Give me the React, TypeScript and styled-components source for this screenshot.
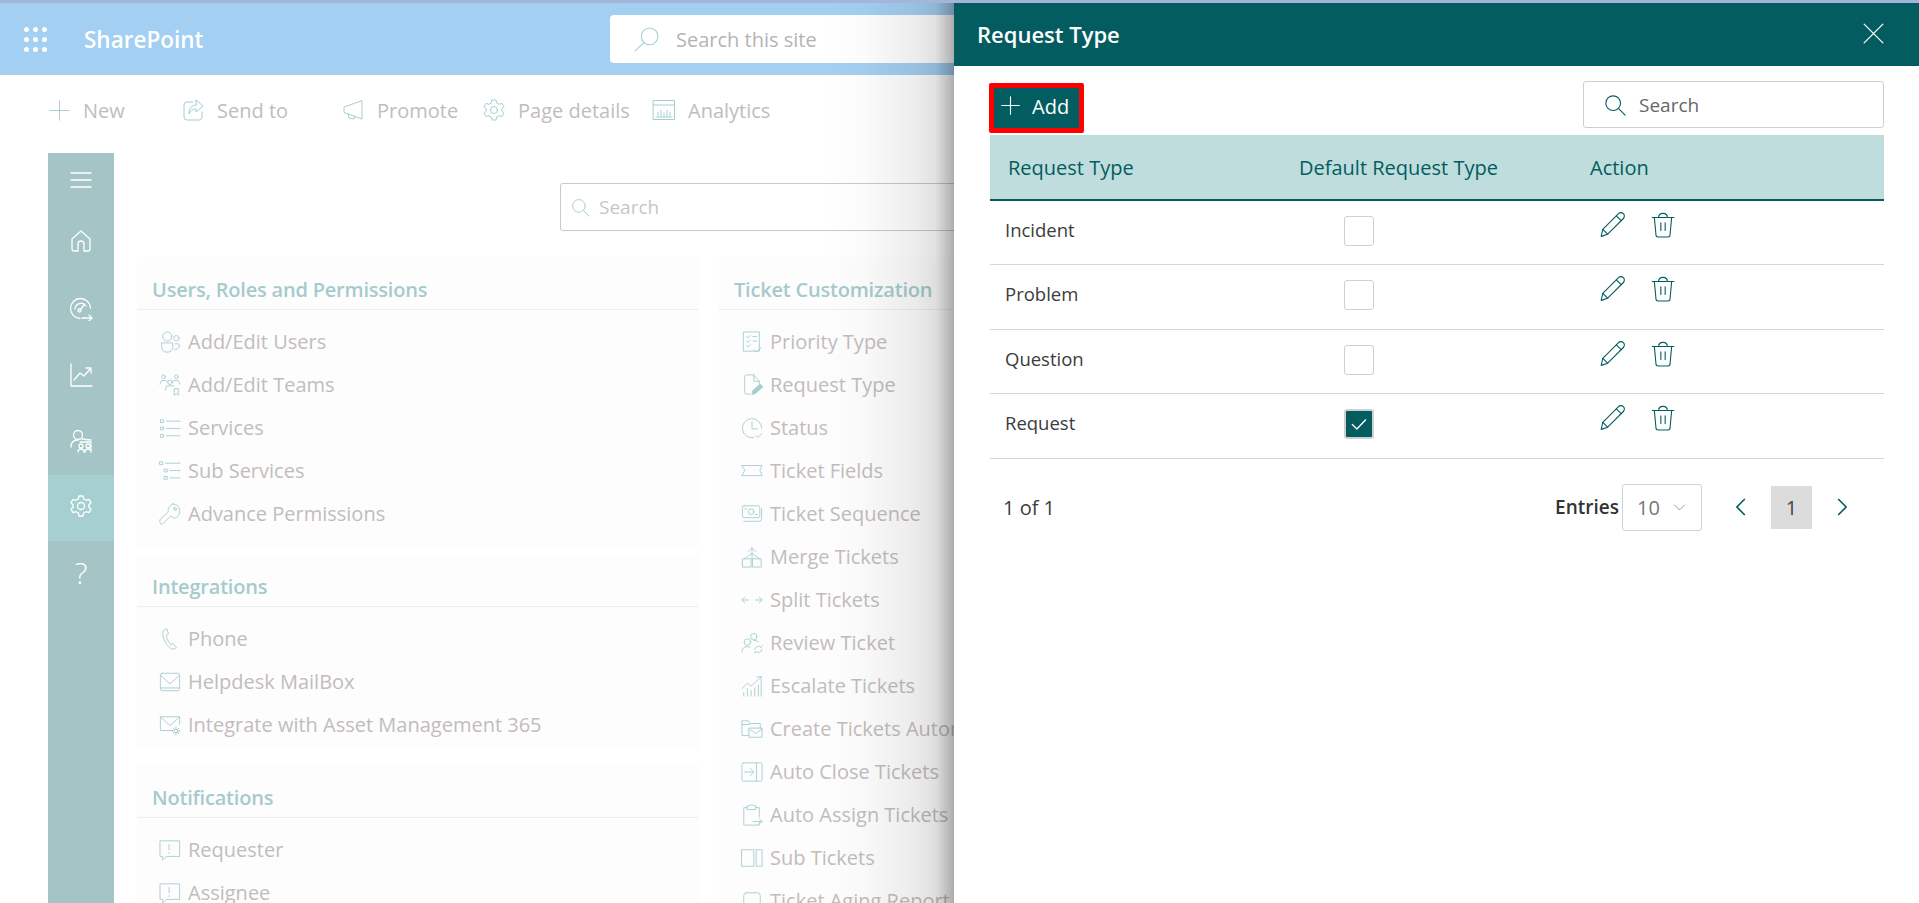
import React from 'react';
import styled, { createGlobalStyle } from 'styled-components';

const teal = '#025c60';
const fadedIcon = '#a6cdd0';

const GlobalStyle = createGlobalStyle`
    html, body {
        margin: 0;
        padding: 0;
        background: #fff;
        font-family: "Open Sans", "Noto Sans", sans-serif;
    }
`

const Page = styled.div`
    position: relative;
    width: 1919px;
    height: 903px;
    box-sizing: border-box;
    border-top: 3px solid #a3b5d8;
    overflow: hidden;
    background: #fff;
`
const SuiteBar = styled.header`
    display: flex;
    align-items: center;
    height: 72px;
    background: #a3cff2;
`
const Waffle = styled.div`
    display: grid;
    grid-template-columns: repeat(3, 5px);
    gap: 5px 4px;
    margin-left: 24px;
`
const Dot = styled.span`
    width: 5px;
    height: 5px;
    border-radius: 50%;
    background: #fff;
`
const Brand = styled.span`
    margin-left: 37px;
    width: 118px;
    font-size: 22.500px;
    font-weight: 600;
    white-space: nowrap;
    color: #fff;
`
const SiteSearch = styled.div`
    display: flex;
    align-items: center;
    gap: 17px;
    width: 600px;
    height: 48px;
    margin-left: 408px;
    padding-left: 24px;
    border-radius: 4px;
    background: #fff;
    font-size: 20px;
    color: #b4b4b4;
`
const CommandBar = styled.nav`
    display: flex;
    align-items: center;
    height: 78px;
    padding: 0 0 8px 48px;
    box-sizing: border-box;
`
const Command = styled.div<{ $width: number }>`
    display: flex;
    align-items: center;
    gap: 12px;
    width: ${p => p.$width}px;
    flex: none;
    font-size: 20px;
    white-space: nowrap;
    color: #c2bcbc;
`
const Main = styled.div`
    display: flex;
    margin-left: 48px;
`
const Rail = styled.aside`
    display: flex;
    flex-direction: column;
    width: 66px;
    height: 750px;
    flex: none;
    background: #a5c4c5;
`
const RailItem = styled.div<{ $active?: boolean; $height?: number; $lift?: number }>`
    display: flex;
    align-items: center;
    justify-content: center;
    height: ${p => p.$height ?? 66}px;
    box-sizing: border-box;
    padding-bottom: ${p => p.$lift ?? 0}px;
    background: ${p => (p.$active ? '#a5cfd0' : 'transparent')};
    color: #fff;
`
const Help = styled.span`
    font-size: 30px;
    font-weight: 300;
    color: #fff;
`
const Content = styled.div`
    flex: none;
    width: 1200px;
    padding-left: 23px;
`
const SearchRow = styled.div`
    height: 104px;
    padding: 30px 0 0 423px;
    box-sizing: border-box;
`
const FilterBox = styled.div`
    display: flex;
    align-items: center;
    gap: 9px;
    width: 560px;
    height: 48px;
    box-sizing: border-box;
    padding-left: 10px;
    border: 1px solid #c9c9c9;
    border-radius: 3px;
    font-size: 19px;
    color: #c6c6c6;
`
const Columns = styled.div`
    display: grid;
    grid-template-columns: 562px 562px;
    column-gap: 20px;
`
const Column = styled.div`
    display: flex;
    flex-direction: column;
`
const Card = styled.section<{ $gap?: number; $bottom?: number }>`
    margin-bottom: ${p => p.$gap ?? 0}px;
    padding-bottom: ${p => p.$bottom ?? 0}px;
    background: #fdfdfd;
`
const CardTitle = styled.h2`
    display: flex;
    align-items: center;
    height: 53px;
    margin: 0;
    padding: 12px 0 0 15px;
    box-sizing: border-box;
    border-bottom: 1px solid #eeeeee;
    font-size: 20px;
    font-weight: 600;
    letter-spacing: -0.2px;
    color: #a5cbcd;
`
const CardList = styled.ul`
    display: flex;
    flex-direction: column;
    margin: 0;
    padding: 10px 0 0 22px;
    list-style: none;
`
const CardItem = styled.li`
    display: flex;
    align-items: center;
    gap: 7px;
    height: 43px;
    font-size: 20px;
    white-space: nowrap;
    color: #c2bcbc;
`
const Glyph = styled.svg<{ $size?: number; $weight?: number }>`
    flex: none;
    width: ${p => p.$size ?? 22}px;
    height: ${p => p.$size ?? 22}px;
    fill: none;
    stroke: currentColor;
    stroke-width: ${p => p.$weight ?? 1.2};
    stroke-linecap: round;
    stroke-linejoin: round;
`
const FadedIcon = styled.span`
    display: flex;
    flex: none;
    color: ${fadedIcon};
`
const Shade = styled.div`
    position: absolute;
    top: 0;
    bottom: 0;
    left: 824px;
    width: 130px;
    background: linear-gradient(
        to right,
        rgba(0, 0, 0, 0) 0,
        rgba(0, 0, 0, 0.015) 30%,
        rgba(0, 0, 0, 0.07) 70%,
        rgba(0, 0, 0, 0.12) 86%,
        rgba(0, 0, 0, 0.32) 100%
    );
`
const Panel = styled.aside`
    position: absolute;
    top: 0;
    left: 954px;
    right: 0;
    bottom: 0;
    background: #fff;
`
const PanelHeader = styled.div`
    display: flex;
    align-items: center;
    justify-content: space-between;
    height: 63px;
    padding: 0 33px 2px 23px;
    box-sizing: border-box;
    background: ${teal};
    color: #fff;
`
const PanelTitle = styled.h1`
    margin: 0;
    font-size: 22px;
    font-weight: 600;
`
const PanelBody = styled.div`
    padding: 0 35px;
`
const Toolbar = styled.div`
    display: flex;
    align-items: flex-start;
    justify-content: space-between;
    height: 69px;
`
const AddButton = styled.button`
    display: flex;
    align-items: center;
    gap: 11px;
    width: 95px;
    height: 50px;
    margin-top: 17px;
    padding: 0 0 3px 6px;
    box-sizing: border-box;
    border: 5px solid #fe0000;
    border-radius: 2px;
    background: ${teal};
    font-family: inherit;
    font-size: 20px;
    color: #fff;
`
const AddIcon = styled.span`
    display: flex;
    padding-bottom: 3px;
`
const PanelSearch = styled.div`
    display: flex;
    align-items: center;
    gap: 13px;
    width: 301px;
    height: 47px;
    margin-top: 15px;
    padding: 1px 0 0 20px;
    box-sizing: border-box;
    border: 1px solid #cfcfcf;
    border-radius: 3px;
    font-size: 19px;
    color: #666;
`
const PanelSearchIcon = styled.span`
    display: flex;
    color: ${teal};
`
const Table = styled.div`
    margin-left: 1px;
`
const HeadRow = styled.div`
    display: grid;
    grid-template-columns: 309px 291px 1fr;
    align-items: center;
    height: 65.500px;
    box-sizing: border-box;
    padding-top: 2px;
    border-bottom: 2px solid ${teal};
    background: #bfdddd;
    font-size: 20px;
    font-weight: 500;
    color: ${teal};
`
const HeadCell = styled.div<{ $first?: boolean }>`
    padding-left: ${p => (p.$first ? 18 : 0)}px;
`
const Row = styled.div`
    display: grid;
    grid-template-columns: 309px 291px 1fr;
    align-items: start;
    height: 64.500px;
    box-sizing: border-box;
    border-bottom: 1px solid #d9d5d6;
`
const NameCell = styled.div`
    padding: 17px 0 0 15px;
    line-height: 24px;
    font-size: 18.500px;
    color: #3c3c3c;
`
const CheckCell = styled.div`
    padding: 15px 0 0 45px;
`
const CheckBox = styled.span<{ $checked?: boolean }>`
    display: flex;
    align-items: center;
    justify-content: center;
    width: 30px;
    height: 30px;
    box-sizing: border-box;
    border: ${p => (p.$checked ? '2px solid #d0d0d0' : '1px solid #cfcfcf')};
    border-radius: 3px;
    background: ${p => (p.$checked ? teal : '#fff')};
    color: #fff;
`
const ActionCell = styled.div`
    display: flex;
    gap: 25px;
    padding: 11px 0 0 9px;
    color: ${teal};
`
const Footer = styled.div`
    display: flex;
    align-items: center;
    height: 47px;
    margin-top: 25px;
    padding: 0 32px 0 14px;
    font-size: 20px;
    color: #3c3c3c;
`
const Pager = styled.div`
    display: flex;
    align-items: center;
    margin-left: auto;
`
const EntriesLabel = styled.span`
    margin-right: 3px;
    font-size: 19px;
    font-weight: 600;
    color: #333;
`
const EntriesSelect = styled.div`
    display: flex;
    align-items: center;
    justify-content: space-between;
    width: 80px;
    height: 47px;
    padding: 0 14px;
    box-sizing: border-box;
    border: 1px solid #d2d2d2;
    border-radius: 3px;
    color: #777;
`
const PagerArrow = styled.span<{ $left: number }>`
    display: flex;
    margin-left: ${p => p.$left}px;
    color: ${teal};
`
const CurrentPage = styled.span`
    display: flex;
    align-items: center;
    justify-content: center;
    width: 41px;
    height: 43px;
    margin-left: 20px;
    background: #dcdcdc;
    color: #444;
`

// 24x24 line drawings, all the icons of the page are kept here
const paths: Record<string, React.ReactNode> = {
    plus: <path d="M12 2v20M2 12h20" />,
    close: <path d="M3 3l18 18M21 3L3 21" />,
    search: <><circle cx="10" cy="10" r="8" /><path d="M16 16l7 7" /></>,
    siteSearch: <><circle cx="15" cy="9" r="8" /><path d="M9.5 15L1 23" /></>,
    send: <><path d="M12 4H6a3 3 0 0 0-3 3v12a3 3 0 0 0 3 3h12a3 3 0 0 0 3-3v-5" /><path d="M15 2l7 6-7 6v-3c-4 0-6 2-7 5 0-5 2-9 7-9z" /></>,
    promote: <><path d="M21 3v18L3 14.5V9.500z" /><path d="M7 16l1 4 5 1 1-3" /></>,
    gear: <><circle cx="12" cy="12" r="3.500" /><path d="M10 2h4l.7 3 2.300 1.300 3-.9 2 3.400-2.200 2.200v2l2.200 2.200-2 3.400-3-.9-2.300 1.300-.7 3h-4l-.7-3L7 17.700l-3 .9-2-3.400L4.200 13v-2L2 8.800l2-3.400 3 .9L9.300 5z" /></>,
    analytics: <><rect x="1.500" y="2.500" width="21" height="19" /><path d="M1.500 7h21M6 18v-4M9 18v-6M12 18v-3M15 18v-6M18 18v-4M4 19h16" /></>,
    menu: <path d="M2 5h20M2 12h20M2 19h20" />,
    home: <path d="M3 10l9-8 9 8v10a2 2 0 0 1-2 2h-4v-7a3 3 0 0 0-6 0v7H5a2 2 0 0 1-2-2z" />,
    gauge: <><path d="M11 21.500A10 10 0 1 1 21.500 11" /><path d="M6 12a6 6 0 0 1 11-3" /><path d="M11 13l4-5" /><circle cx="10.500" cy="13.500" r="1.500" /><path d="M13 21h10M20 18l3 3-3 3" /></>,
    chart: <path d="M2 1v22h21M5 17l6-7 4 3 7-8M17 5h5v5" />,
    agents: <><circle cx="9" cy="6" r="4.500" /><path d="M2 18c0-5 3-7 7-7M11 13h11v8M13 10l9 1" /><circle cx="12" cy="17" r="2" /><circle cx="19" cy="17" r="2" /><path d="M9 23c0-2 1-3 3-3s3 1 3 3M16 23c0-2 1-3 3-3s3 1 3 3" /></>,
    users: <><circle cx="9" cy="6" r="5" /><circle cx="19" cy="8" r="3" /><path d="M3 13h12v5a5 5 0 0 1-5 5H8a5 5 0 0 1-5-5zM18 14h3a2 2 0 0 1 1 3 4 4 0 0 1-5 3" /></>,
    teams: <><circle cx="5" cy="3" r="2" /><circle cx="19" cy="3" r="2" /><circle cx="12" cy="9" r="2.500" /><path d="M1 11l2-4h4l3 2M23 11l-2-4h-4l-3 2M7 18l1-5h8M17 16h4v7l-2-1.500-2 1.500z" /></>,
    services: <><rect x="2" y="3" width="3" height="3" /><rect x="2" y="11" width="3" height="3" /><rect x="2" y="19" width="3" height="3" /><path d="M8 4.500h15M8 12.500h15M8 20.500h15" /></>,
    subServices: <><rect x="1" y="2" width="3" height="3" /><rect x="6" y="10" width="3" height="3" /><rect x="6" y="18" width="3" height="3" /><path d="M7 3.500h16M12 11.500h11M12 19.500h11" /></>,
    key: <><path d="M15 1a8 8 0 0 1 1.500 15.800L13 14l-9 9H2l-1-2v-3l9-8A8 8 0 0 1 15 1z" /><circle cx="17.500" cy="6.500" r="1.500" /></>,
    phone: <path d="M8 1L4.500 3C3 8 6 17 13 22.500c2 1 5 .5 6-1.500l-4-4-2.500 1C10 15 8 11 8 8l2-1.500z" />,
    mail: <><rect x="1.500" y="2.500" width="21" height="19" rx="2" /><path d="M2 5l10 9 10-9M2 18.500h20" /></>,
    mailGear: <><path d="M15 18H1.500V3h21v8" /><path d="M2 3.500l10 9 10-9" /><circle cx="18.500" cy="18.500" r="2" /><path d="M18.500 14v2M18.500 21v2M14 18.500h2M21 18.500h2M15.500 15.500l1.500 1.500M20 20l1.500 1.500M21.500 15.500L20 17M17 20l-1.500 1.500" /></>,
    alert: <><path d="M1.500 2h21v17H8l-4 4v-4H1.500z" /><path d="M11 6v6M11 15v1" /></>,
    priority: <><rect x="3" y="1" width="17" height="21" /><path d="M6 6l1.500 1.500L10 5M13 6h4M6 11l1.500 1.500L10 10M13 11h4M6 16l1.500 1.500L10 15M14 21l3 2 5-5" /></>,
    docEdit: <><path d="M10 22H6a2 2 0 0 1-2-2V3a2 2 0 0 1 2-2h8l6 7v3M14 1v7h6" /><path d="M12 22l1-4 8-7 3 3-8 7z" fill="currentColor" /></>,
    clockCheck: <><path d="M14 22.500A10.500 10.500 0 1 1 22.500 12" /><path d="M12 5v8h6M16 20l2.500 2.500L23 18" /></>,
    ticket: <path d="M1 6h22l-2.500 5 2.500 6H1l3-5.500z" />,
    money: <><rect x="1.500" y="3" width="19" height="13" rx="2" /><circle cx="11" cy="9.500" r="3" /><path d="M4 6.500h2M16 12.500h2M22.500 6v11a3 3 0 0 1-3 3H3" /></>,
    merge: <><rect x="2" y="14" width="9" height="9" /><rect x="13" y="14" width="9" height="9" /><path d="M12 14V2M8 6l4-4 4 4M4 14l8-6 8 6" /></>,
    split: <path d="M1 12h7M4 9l-3 3 3 3M23 12h-7M20 9l3 3-3 3" />,
    review: <><circle cx="14" cy="5" r="3.500" /><circle cx="7" cy="11" r="3.500" /><path d="M1 22c0-4 2-6 6-6 1 0 2 0 3 1M19 11c-1-1-3-2-5-2M15 19a4 4 0 0 1 7-2l1-2M23 19a4 4 0 0 1-7 2l-1 2" /></>,
    escalate: <path d="M1 15l6-6 4 3L22 2M17 2h5v5M3 23v-4M7 23v-8M11 23v-6M15 23v-9M19 23v-12M22 23V8" />,
    folderMail: <><path d="M9 19H1V3h7l2 3h11v5" /><path d="M1 7h9" /><rect x="9" y="11" width="14" height="10" /><path d="M9 12l7 5 7-5" /></>,
    autoClose: <><rect x="1" y="2" width="22" height="20" rx="2" /><path d="M17 2v20M4 12h9M10 8l4 4-4 4" /></>,
    clipboard: <><path d="M7 4H3v19h17v-4M16 4h4v10" /><path d="M7 2h2l1-1h3l1 1h2v4H7zM13 19h10M20 16l3 3-3 3" /></>,
    subTicket: <><rect x="1" y="3" width="13" height="18" /><rect x="17" y="3" width="6" height="18" /></>,
    aging: <rect x="3" y="3" width="18" height="20" rx="3" />,
    pencil: <><path d="M2 22.500l1.500-6.500L18 1.500a3 3 0 0 1 4.500 4.500L8 20.500z" /><path d="M16 3.500l4.500 4.500M3.500 16l4.500 4.500" /></>,
    trash: <><path d="M2 5h20M4 5l1.500 16a2 2 0 0 0 2 2h9a2 2 0 0 0 2-2L20 5M8 5c0-5 8-5 8 0M10 10v7M14 10v7" /></>,
    check: <path d="M4 12.500l5.500 5.500L20 7" />,
    chevronDown: <path d="M4 8l8 8 8-8" />,
    chevronLeft: <path d="M16 3l-9 9 9 9" />,
    chevronRight: <path d="M8 3l9 9-9 9" />,
};

type IconProps = { name: string; size?: number; weight?: number };

const Icon = ({ name, size, weight }: IconProps) => (
    <Glyph viewBox="0 0 24 24" $size={size} $weight={weight}>{paths[name]}</Glyph>
);

const commands = [
    { icon: 'plus', label: 'New', width: 133 },
    { icon: 'send', label: 'Send to', width: 160 },
    { icon: 'promote', label: 'Promote', width: 141 },
    { icon: 'gear', label: 'Page details', width: 170 },
    { icon: 'analytics', label: 'Analytics', width: 140 },
];

const rail = [
    { icon: 'menu', height: 54 },
    { icon: 'home', height: 68 },
    { icon: 'gauge', height: 67 },
    { icon: 'chart', height: 66 },
    { icon: 'agents', height: 67, lift: 2 },
    { icon: 'gear', active: true, lift: 4 },
];

const leftCards = [
    {
        title: 'Users, Roles and Permissions',
        gap: 8,
        bottom: 11,
        items: [
            ['users', 'Add/Edit Users'],
            ['teams', 'Add/Edit Teams'],
            ['services', 'Services'],
            ['subServices', 'Sub Services'],
            ['key', 'Advance Permissions'],
        ],
    },
    {
        title: 'Integrations',
        gap: 15,
        bottom: 4,
        items: [
            ['phone', 'Phone'],
            ['mail', 'Helpdesk MailBox'],
            ['mailGear', 'Integrate with Asset Management 365'],
        ],
    },
    {
        title: 'Notifications',
        gap: 0,
        bottom: 0,
        items: [
            ['alert', 'Requester'],
            ['alert', 'Assignee'],
        ],
    },
];

const ticketItems = [
    ['priority', 'Priority Type'],
    ['docEdit', 'Request Type'],
    ['clockCheck', 'Status'],
    ['ticket', 'Ticket Fields'],
    ['money', 'Ticket Sequence'],
    ['merge', 'Merge Tickets'],
    ['split', 'Split Tickets'],
    ['review', 'Review Ticket'],
    ['escalate', 'Escalate Tickets'],
    ['folderMail', 'Create Tickets Automatically'],
    ['autoClose', 'Auto Close Tickets'],
    ['clipboard', 'Auto Assign Tickets'],
    ['subTicket', 'Sub Tickets'],
    ['aging', 'Ticket Aging Report'],
];

const requestTypes = [
    { name: 'Incident', isDefault: false },
    { name: 'Problem', isDefault: false },
    { name: 'Question', isDefault: false },
    { name: 'Request', isDefault: true },
];

const MenuList = ({ items }: { items: string[][] }) => (
    <CardList>
        {items.map(([icon, label]) => (
            <CardItem key={label}>
                <FadedIcon><Icon name={icon} weight={1} /></FadedIcon>
                {label}
            </CardItem>
        ))}
    </CardList>
);

const App = () => {
    return (
        <Page>
            <GlobalStyle />
            <SuiteBar>
                <Waffle>
                    {Array.from({ length: 9 }, (_, i) => <Dot key={i} />)}
                </Waffle>
                <Brand>SharePoint</Brand>
                <SiteSearch>
                    <FadedIcon><Icon name="siteSearch" size={25} weight={1} /></FadedIcon>
                    Search this site
                </SiteSearch>
            </SuiteBar>
            <CommandBar>
                {commands.map(c => (
                    <Command key={c.label} $width={c.width}>
                        <FadedIcon><Icon name={c.icon} size={c.icon === 'plus' ? 23 : 24} weight={1} /></FadedIcon>
                        {c.label}
                    </Command>
                ))}
            </CommandBar>
            <Main>
                <Rail>
                    {rail.map(r => (
                        <RailItem key={r.icon} $active={r.active} $height={r.height} $lift={r.lift}>
                            <Icon name={r.icon} size={24} weight={1.3} />
                        </RailItem>
                    ))}
                    <RailItem $lift={4}><Help>?</Help></RailItem>
                </Rail>
                <Content>
                    <SearchRow>
                        <FilterBox>
                            <FadedIcon><Icon name="search" size={19} weight={1.2} /></FadedIcon>
                            Search
                        </FilterBox>
                    </SearchRow>
                    <Columns>
                        <Column>
                            {leftCards.map(card => (
                                <Card key={card.title} $gap={card.gap} $bottom={card.bottom}>
                                    <CardTitle>{card.title}</CardTitle>
                                    <MenuList items={card.items} />
                                </Card>
                            ))}
                        </Column>
                        <Column>
                            <Card>
                                <CardTitle>Ticket Customization</CardTitle>
                                <MenuList items={ticketItems} />
                            </Card>
                        </Column>
                    </Columns>
                </Content>
            </Main>
            <Shade />
            <Panel>
                <PanelHeader>
                    <PanelTitle>Request Type</PanelTitle>
                    <Icon name="close" size={25} weight={1.2} />
                </PanelHeader>
                <PanelBody>
                    <Toolbar>
                        <AddButton>
                            <AddIcon><Icon name="plus" size={21} weight={1.3} /></AddIcon>
                            Add
                        </AddButton>
                        <PanelSearch>
                            <PanelSearchIcon><Icon name="search" size={22} weight={1.2} /></PanelSearchIcon>
                            Search
                        </PanelSearch>
                    </Toolbar>
                    <Table>
                        <HeadRow>
                            <HeadCell $first>Request Type</HeadCell>
                            <HeadCell>Default Request Type</HeadCell>
                            <HeadCell>Action</HeadCell>
                        </HeadRow>
                        {requestTypes.map(r => (
                            <Row key={r.name}>
                                <NameCell>{r.name}</NameCell>
                                <CheckCell>
                                    <CheckBox $checked={r.isDefault}>
                                        {r.isDefault && <Icon name="check" size={20} weight={1.6} />}
                                    </CheckBox>
                                </CheckCell>
                                <ActionCell>
                                    <Icon name="pencil" size={26} weight={1} />
                                    <Icon name="trash" size={26} weight={1} />
                                </ActionCell>
                            </Row>
                        ))}
                    </Table>
                    <Footer>
                        1 of 1
                        <Pager>
                            <EntriesLabel>Entries</EntriesLabel>
                            <EntriesSelect>
                                10
                                <Icon name="chevronDown" size={15} weight={1.2} />
                            </EntriesSelect>
                            <PagerArrow $left={29}><Icon name="chevronLeft" size={20} weight={2} /></PagerArrow>
                            <CurrentPage>1</CurrentPage>
                            <PagerArrow $left={20}><Icon name="chevronRight" size={20} weight={2} /></PagerArrow>
                        </Pager>
                    </Footer>
                </PanelBody>
            </Panel>
        </Page>
    );
};

export default App;
